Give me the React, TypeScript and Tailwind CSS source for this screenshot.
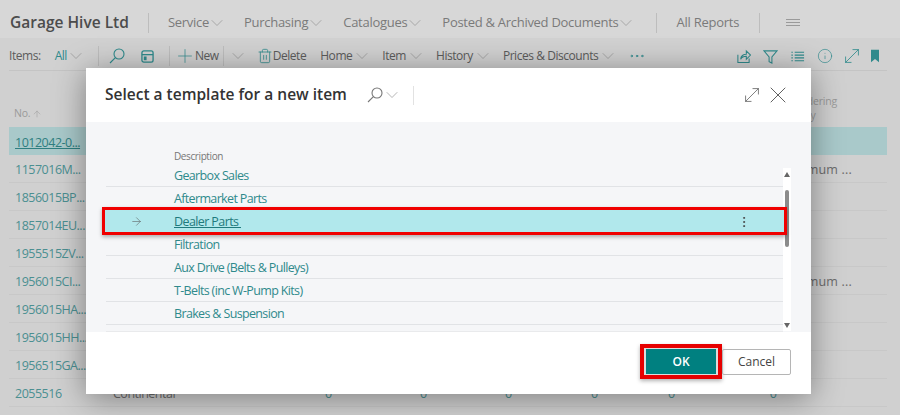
import { ChevronDown, Trash2, Info, MoveDiagonal, X, ArrowRight, EllipsisVertical, Ellipsis, ArrowUp, Plus } from "lucide-react";

const navItems = ["Service", "Purchasing", "Catalogues", "Posted & Archived Documents"];
const actions = ["Home", "Item", "History", "Prices & Discounts"];
const itemRows = [
  { no: "1157016M...", policy: "Maximum ..." },
  { no: "1856015BP..." },
  { no: "1857014EU..." },
  { no: "1955515ZV..." },
  { no: "1956015CI...", policy: "Maximum ..." },
  { no: "1956015HA..." },
  { no: "1956015HH..." },
  { no: "1956515GA..." },
];
const templates = ["Gearbox Sales", "Aftermarket Parts", "Dealer Parts", "Filtration", "Aux Drive (Belts & Pulleys)", "T-Belts (inc W-Pump Kits)", "Brakes & Suspension"];

const Chevron = ({ className = "" }: { className?: string }) => (
  <ChevronDown className={`-mx-[5px] h-5 w-5 shrink-0 text-[#8f8f8f] ${className}`} strokeWidth={0.8} />
);

const SearchGlyph = ({ className = "" }: { className?: string }) => (
  <svg viewBox="0 0 16 16" fill="none" stroke="currentColor" strokeWidth="1.1" className={`h-[16px] w-[16px] ${className}`}>
    <circle cx="10" cy="6" r="5" />
    <path d="M6.4 9.6 1 15" />
  </svg>
);

const Sep = ({ className = "" }: { className?: string }) => <div className={`h-[20px] w-px shrink-0 bg-[#bdbdbd] ${className}`} />;

export default function App() {
  return (
    <div className="relative h-[415px] w-[900px] overflow-hidden bg-[#d0d0d0] font-['Open_Sans',sans-serif] text-[#5c5c5c]">
      {/* Top nav */}
      <header className="flex h-[38px] items-center bg-[#d7d7d7] pl-[10px] pt-[7px]">
        <span className="text-[15.5px] font-semibold text-[#4c4c4c]">Garage Hive Ltd</span>
        <Sep className="ml-[19px] mr-[19px]" />
        <nav className="flex items-center gap-[22px] text-[13px] tracking-[-0.28px] text-[#7a7a7a]">
          {navItems.map((n) => (
            <span key={n} className="flex items-center gap-[3px]">{n}<Chevron /></span>
          ))}
        </nav>
        <Sep className="ml-[25px] mr-[19px]" />
        <span className="text-[13px] tracking-[-0.25px] text-[#7a7a7a]">All Reports</span>
        <Sep className="ml-[20px] mr-[26px]" />
        <svg viewBox="0 0 14 7" fill="none" stroke="#9a9a9a" strokeWidth="1" className="h-[7px] w-[14px]">
          <path d="M0 .5h14M0 3.5h14M0 6.5h14" />
        </svg>
      </header>

      {/* Action bar */}
      <div className="flex h-[32px] items-center bg-[#d1d1d1] pl-[9px] pr-[21px] pt-[4px] text-[12px] tracking-[-0.45px]">
        <span>Items:</span>
        <span className="ml-[14px] text-[#2f8a8c]">All</span>
        <span className="ml-[4px] flex"><Chevron /></span>
        <Sep className="ml-[17px]" />
        <SearchGlyph className="ml-[10px] text-[#2f8a8c]" />
        <svg viewBox="0 0 14 14" fill="none" stroke="#2f8a8c" strokeWidth="1.4" className="ml-[16px] h-[13px] w-[13px]">
          <rect x="1" y="1" width="12" height="12" rx="2" />
          <path d="M1 5h12" />
          <rect x="3" y="7" width="3" height="4" fill="#2f8a8c" stroke="none" />
        </svg>
        <Sep className="ml-[15px]" />
        <Plus className="-mx-[4px] ml-[4px] h-[22px] w-[22px] text-[#2f8a8c]" strokeWidth={0.8} />
        <span className="ml-[3px]">New</span>
        <Sep className="ml-[4px]" />
        <span className="ml-[9px] flex"><Chevron /></span>
        <Trash2 className="ml-[14px] h-[16px] w-[16px] text-[#2f8a8c]" strokeWidth={1.2} />
        <span>Delete</span>
        <div className="ml-[14px] flex items-center gap-[15px]">
          {actions.map((a) => (
            <span key={a} className="flex items-center gap-[5px]">{a}<Chevron /></span>
          ))}
        </div>
        <Ellipsis className="ml-[15px] h-[18px] w-[18px] text-[#2f8a8c]" strokeWidth={1.2} />
        <div className="ml-auto flex w-[143px] items-center justify-between text-[#2f8a8c]">
          <svg viewBox="0 0 16 16" fill="none" stroke="currentColor" strokeWidth="1.1" className="h-[15px] w-[15px]">
            <path d="M2 6v8.5h12V10" />
            <path d="M5 11c0-3.5 3-5.5 6-5.5V2l4.5 4.5L11 11V7.8c-3 0-5 1.2-6 3.2z" />
          </svg>
          <svg viewBox="0 0 16 16" fill="none" stroke="currentColor" strokeWidth="1.1" className="h-[15px] w-[15px]">
            <path d="M1 2h14L9.5 8.5V15l-3-1.5v-5z" />
          </svg>
          <svg viewBox="0 0 16 16" fill="none" stroke="currentColor" strokeWidth="1.2" className="h-[15px] w-[15px]">
            <path d="M1.5 3.5h1.5M5 3.5h10M1.5 6.5h1.5M5 6.5h10M1.5 9.5h1.5M5 9.5h10M1.5 12.5h1.5M5 12.5h10" />
          </svg>
          <Info className="h-[16px] w-[16px]" strokeWidth={1} />
          <MoveDiagonal className="-m-[4px] h-[22px] w-[22px]" strokeWidth={0.9} />
          <svg viewBox="0 0 9 14" fill="currentColor" className="h-[14px] w-[8px]">
            <path d="M0 0h9v14L4.5 10.5 0 14z" />
          </svg>
        </div>
      </div>

      {/* Background list */}
      <main className="ml-[9px] mr-[13px] border-t border-[#c4c4c4]">
        <div className="flex h-[56px] items-end justify-between pb-[5px] text-[10.5px] tracking-[-0.2px] text-[#9a9a9a]">
          <span className="ml-[5px] flex items-center gap-[2px]">No.<ArrowUp className="h-[10px] w-[10px]" strokeWidth={1.2} /></span>
          <span className="mr-[50px] leading-[14px]">Reordering<br /><span className="ml-[4px]">Policy</span></span>
        </div>
        <div className="flex h-[28px] items-center bg-[#a9c9ca] pl-[6px] pt-[4px] text-[12.5px] tracking-[-0.5px] text-[#2f7f81] underline">1012042-0...</div>
        {itemRows.map((row) => (
          <div key={row.no} className="flex h-[28px] items-center justify-between border-b border-[#c8c8c8] pl-[6px] pt-[4px] text-[12.5px] tracking-[-0.5px] text-[#4b8f91]">
            <span>{row.no}</span>
            {row.policy && <span className="mr-[35px] tracking-[0.2px] text-[#6b6b6b]">{row.policy}</span>}
          </div>
        ))}
        <div className="flex h-[28px] items-center border-b border-[#c8c8c8] pl-[6px] pt-[4px] text-[12.5px] tracking-[-0.5px] text-[#4b8f91]">
          <span className="w-[98px]">2055516</span>
          <span className="w-[212px] text-[#6b6b6b]">Continental</span>
          <span className="w-[95px]">0</span>
          <span className="w-[85px]">0</span>
          <span className="w-[86px]">0</span>
          <span className="w-[77px]">0</span>
          <span>0</span>
          <span className="ml-[95px]">0</span>
        </div>
      </main>

      {/* Dialog */}
      <div className="absolute left-[86px] top-[68px] flex h-[326px] w-[725px] flex-col bg-white shadow-[0_4px_30px_rgba(0,0,0,0.4)]">
        <div className="flex h-[54px] shrink-0 items-center pl-[19px] pr-[26px]">
          <h1 className="text-[15.5px] font-semibold text-[#333]">Select a template for a new item</h1>
          <SearchGlyph className="ml-[20px] text-[#777]" />
          <span className="ml-[4px] flex"><Chevron /></span>
          <div className="ml-[16px] h-[19px] w-px bg-[#e2e2e2]" />
          <MoveDiagonal className="ml-auto h-[22px] w-[22px] text-[#666]" strokeWidth={0.9} />
          <X className="-mr-[7px] ml-[1px] h-[28px] w-[28px] text-[#555]" strokeWidth={0.8} />
        </div>
        <div className="relative h-[210px] shrink-0 overflow-hidden bg-[#f5f6f8] pl-[20px] pr-[28px] pt-[27px]">
          <div className="h-[15px] pl-[68px] text-[10px] leading-[15px] tracking-[-0.4px] text-[#777]">Description</div>
          {templates.map((t) => t === "Dealer Parts" ? (
            <div key={t} className="relative z-10 -mx-[4px] -mb-[2px] -mt-[3px] flex h-[28px] items-center whitespace-pre border-[3px] border-[#f00000] bg-[#b1e8ec] pl-[69px] pt-[2px] text-[12.5px] tracking-[-0.6px] text-[#1f7a7d] underline shadow-[0_2px_4px_rgba(0,0,0,0.3)]">
              <ArrowRight className="absolute left-[25px] top-[5px] h-[13px] w-[13px] text-[#555]" strokeWidth={1} />
              {t + " "}
              <EllipsisVertical className="absolute right-[33px] top-[5px] h-[14px] w-[14px] text-[#444]" strokeWidth={1.6} />
            </div>
          ) : (
            <div key={t} className="flex h-[23px] items-center border-b border-[#e1e3e6] pl-[68px] pt-[3px] text-[12.5px] tracking-[-0.65px] text-[#2f8a8c]">{t}</div>
          ))}
          <div className="mt-[6px] h-[2px] bg-[#e9eaec]" />
          <div className="absolute bottom-[1px] right-[20px] top-[46px] flex w-[8px] flex-col items-center justify-between bg-white">
            <span className="mt-[4px] h-0 w-0 border-x-[3px] border-b-[5px] border-x-transparent border-b-[#666]" />
            <span className="mb-[3px] h-0 w-0 border-x-[3px] border-t-[5px] border-x-transparent border-t-[#666]" />
            <span className="absolute top-[22px] h-[57px] w-[4px] rounded-full bg-[#8c8c8c]" />
          </div>
        </div>
        <div className="flex flex-1 items-start justify-end pr-[20px] pt-[12px]">
          <div className="border-[4px] border-[#e60000] bg-[#dcdcdc] px-[2px] py-[1px] shadow-[0_2px_4px_rgba(0,0,0,0.3)]">
            <button className="flex h-[25px] w-[70px] items-center justify-center bg-[#008080] text-[12px] font-semibold text-white">OK</button>
          </div>
          <button className="mt-[5px] flex h-[26px] w-[69px] items-center justify-center rounded-[2px] border border-[#b5b5b5] text-[12px] text-[#444]">Cancel</button>
        </div>
      </div>
    </div>
  );
}
